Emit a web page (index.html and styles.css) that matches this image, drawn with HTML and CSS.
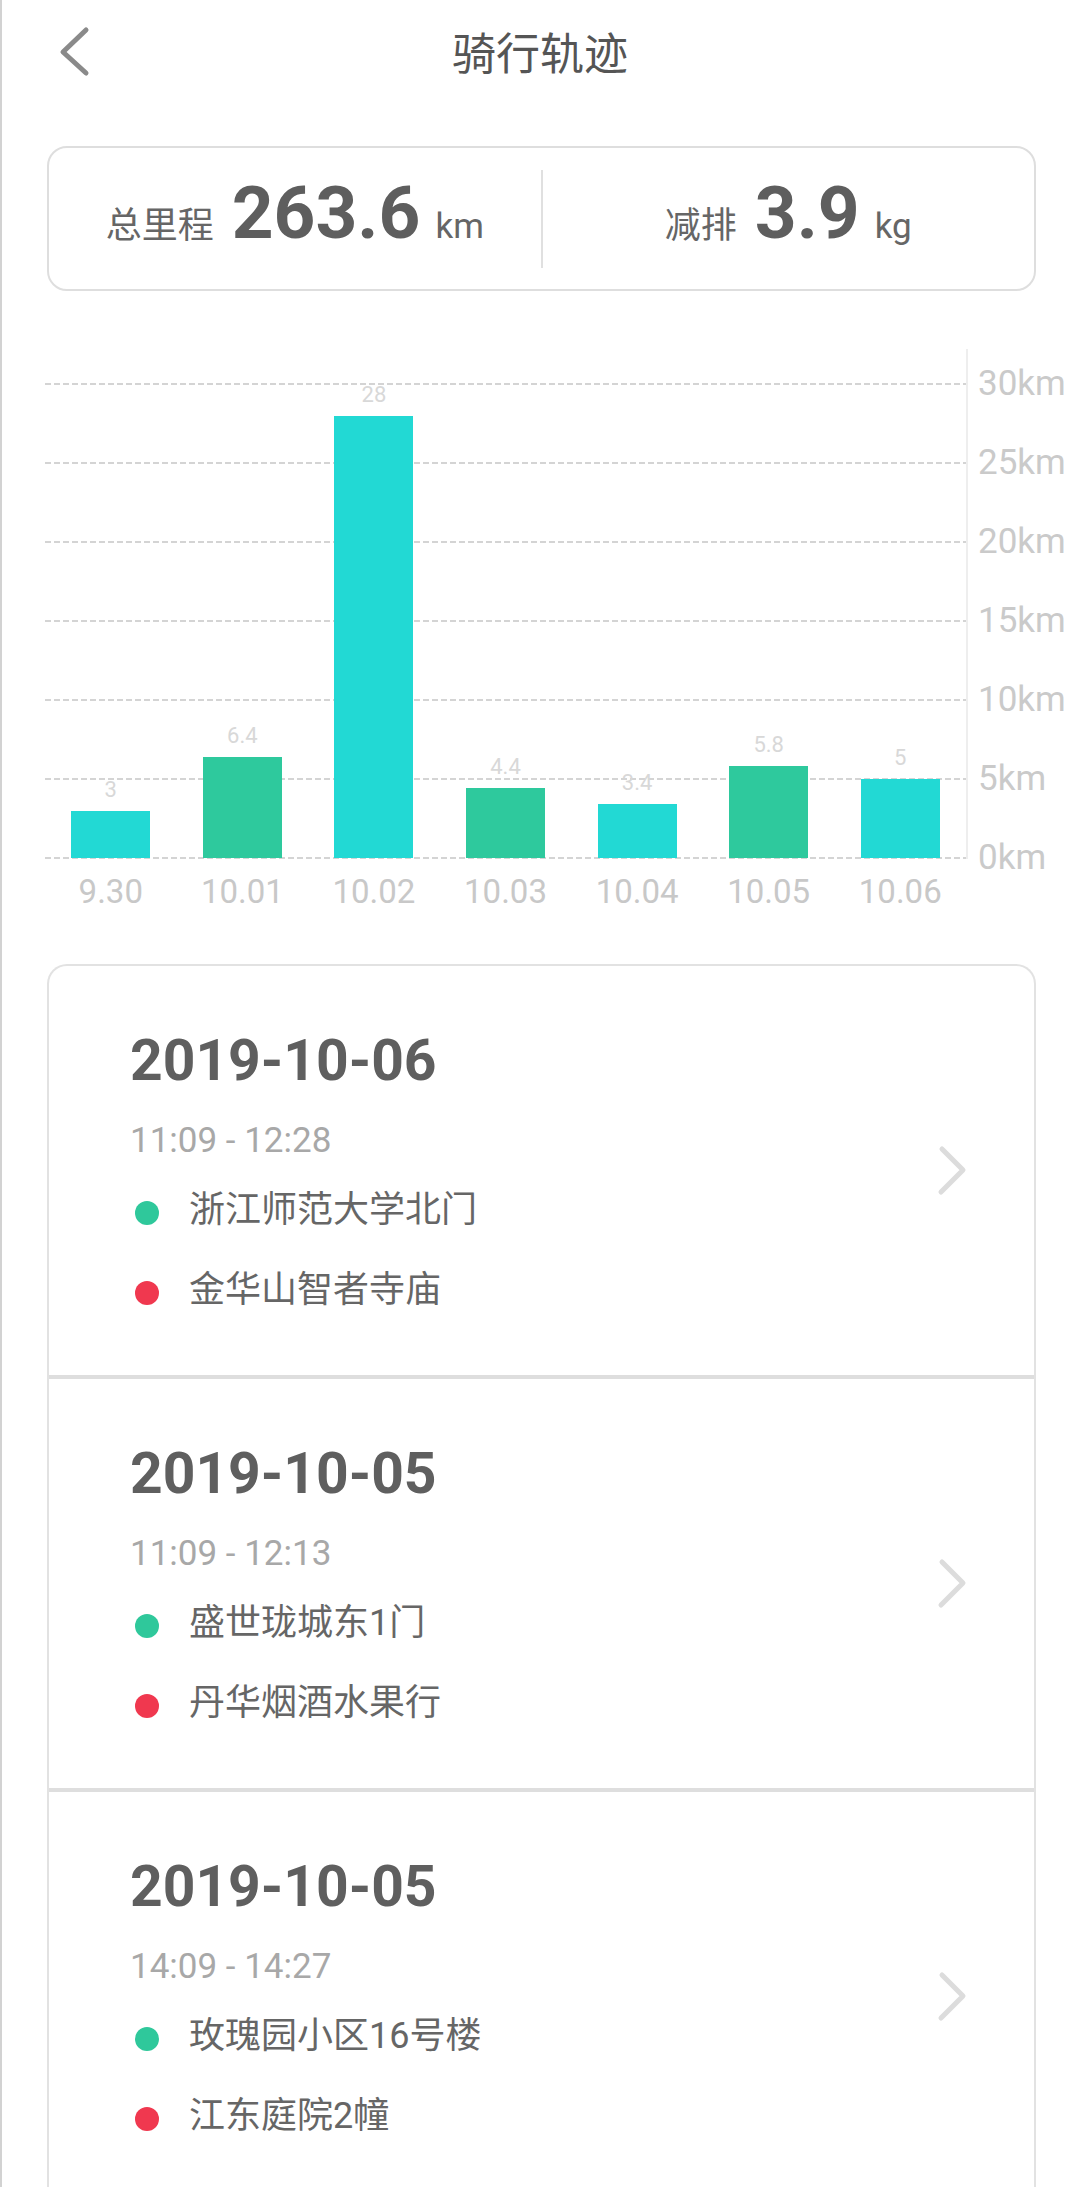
FILE: index.html
```html
<!DOCTYPE html>
<html lang="zh-CN">
<head>
<meta charset="utf-8">
<title>骑行轨迹</title>
<link rel="stylesheet" href="styles.css">
</head>
<body>
<div class="page">
  <header class="header">
    <div class="back">
      <svg width="40" height="60" viewBox="0 0 40 60"><polyline points="31,8 8,30 31,51" fill="none" stroke="#8a8a8a" stroke-width="5" stroke-linecap="round" stroke-linejoin="round"/></svg>
    </div>
    <h1 class="title">骑行轨迹</h1>
    <div></div>
  </header>

  <section class="stats">
    <div class="stat">
      <span class="stat-label">总里程</span>
      <span class="stat-num">263.6</span>
      <span class="stat-unit">km</span>
    </div>
    <div class="stat-divider"></div>
    <div class="stat">
      <span class="stat-label">减排</span>
      <span class="stat-num">3.9</span>
      <span class="stat-unit">kg</span>
    </div>
  </section>

  <section class="chart">
    <div class="plot">
      <div class="gridlines">
        <div class="gl"></div><div class="gl"></div><div class="gl"></div><div class="gl"></div><div class="gl"></div><div class="gl"></div><div class="gl"></div>
      </div>
      <div class="bars">
        <div class="slot"><span class="val">3</span><div class="bar cyan" style="height:47px"></div></div>
        <div class="slot"><span class="val">6.4</span><div class="bar green" style="height:101px"></div></div>
        <div class="slot"><span class="val">28</span><div class="bar cyan" style="height:442px"></div></div>
        <div class="slot"><span class="val">4.4</span><div class="bar green" style="height:70px"></div></div>
        <div class="slot"><span class="val">3.4</span><div class="bar cyan" style="height:54px"></div></div>
        <div class="slot"><span class="val">5.8</span><div class="bar green" style="height:92px"></div></div>
        <div class="slot"><span class="val">5</span><div class="bar cyan" style="height:79px"></div></div>
      </div>
    </div>
    <div class="yaxis">
      <div class="ylabels">
        <span>30km</span><span>25km</span><span>20km</span><span>15km</span><span>10km</span><span>5km</span><span>0km</span>
      </div>
    </div>
    <div class="xlabels">
      <span>9.30</span><span>10.01</span><span>10.02</span><span>10.03</span><span>10.04</span><span>10.05</span><span>10.06</span>
    </div>
  </section>

  <section class="trips">
    <div class="trip">
      <div class="trip-body">
        <div class="trip-date">2019-10-06</div>
        <div class="trip-time">11:09 - 12:28</div>
        <div class="place"><span class="dot start"></span><span class="place-name">浙江师范大学北门</span></div>
        <div class="place second"><span class="dot end"></span><span class="place-name">金华山智者寺庙</span></div>
      </div>
      <svg class="arrow" width="30" height="52" viewBox="0 0 30 52"><polyline points="5,4 26,25 4,47" fill="none" stroke="#dcdcdc" stroke-width="5" stroke-linecap="round" stroke-linejoin="round"/></svg>
    </div>
    <div class="trip">
      <div class="trip-body">
        <div class="trip-date">2019-10-05</div>
        <div class="trip-time">11:09 - 12:13</div>
        <div class="place"><span class="dot start"></span><span class="place-name">盛世珑城东1门</span></div>
        <div class="place second"><span class="dot end"></span><span class="place-name">丹华烟酒水果行</span></div>
      </div>
      <svg class="arrow" width="30" height="52" viewBox="0 0 30 52"><polyline points="5,4 26,25 4,47" fill="none" stroke="#dcdcdc" stroke-width="5" stroke-linecap="round" stroke-linejoin="round"/></svg>
    </div>
    <div class="trip">
      <div class="trip-body">
        <div class="trip-date">2019-10-05</div>
        <div class="trip-time">14:09 - 14:27</div>
        <div class="place"><span class="dot start"></span><span class="place-name">玫瑰园小区16号楼</span></div>
        <div class="place second"><span class="dot end"></span><span class="place-name">江东庭院2幢</span></div>
      </div>
      <svg class="arrow" width="30" height="52" viewBox="0 0 30 52"><polyline points="5,4 26,25 4,47" fill="none" stroke="#dcdcdc" stroke-width="5" stroke-linecap="round" stroke-linejoin="round"/></svg>
    </div>
  </section>
</div>
</body>
</html>
```
FILE: styles.css
```css
* { box-sizing: border-box; }
html, body { margin: 0; padding: 0; background: #ffffff; }
body {
  font-family: Roboto, "Noto Sans CJK SC", "Noto Sans", sans-serif;
  color: #666666;
}
.page {
  width: 1080px;
  min-height: 2187px;
  border-left: 2px solid #d2d2d2;
  overflow: hidden;
}

/* header */
.header {
  display: grid;
  grid-template-columns: 1fr auto 1fr;
  height: 104px;
  padding-top: 6px;
}
.back {
  padding-left: 53px;
  margin-top: 16px;
}
.back svg { display: block; }
.title {
  margin: 0;
  font-size: 44px;
  font-weight: 400;
  line-height: 98px;
  color: #555555;
  transform: translateX(-1px);
}

/* stats card */
.stats {
  display: flex;
  align-items: center;
  height: 145px;
  margin: 42px 44px 0 45px;
  border: 2px solid #dedede;
  border-radius: 20px;
}
.stat {
  flex: 1;
  display: flex;
  align-items: baseline;
  justify-content: center;
  padding-bottom: 12px;
}
.stat-label {
  font-size: 36px;
  line-height: 36px;
  color: #666666;
}
.stat-num {
  font-size: 73px;
  line-height: 74px;
  font-weight: 700;
  color: #5e5e5e;
  margin: 0 15px 0 18px;
}
.stat-unit {
  font-size: 35px;
  line-height: 36px;
  color: #666666;
}
.stat-divider {
  width: 2px;
  height: 98px;
  background: #e0e0e0;
}

/* chart */
.chart {
  display: grid;
  grid-template-columns: 921px auto;
  margin: 58px 0 0 43px;
}
.plot {
  display: grid;
  height: 510px;
}
.gridlines, .bars { grid-area: 1 / 1; }
.gridlines {
  display: flex;
  flex-direction: column;
  gap: 77px;
  padding-top: 34px;
}
.gl {
  height: 2px;
  background: repeating-linear-gradient(90deg, #d4d4d4 0 6px, transparent 6px 9px);
}
.bars {
  display: flex;
  align-items: flex-end;
  padding-bottom: 1px;
}
.slot {
  flex: 1;
  display: flex;
  flex-direction: column;
  align-items: center;
}
.val {
  font-size: 22px;
  line-height: 22px;
  color: #d8d8d8;
  margin-bottom: 10px;
}
.bar { width: 79px; }
.bar.cyan { background: #22d9d4; }
.bar.green { background: #2ec99d; }

.yaxis {
  height: 510px;
  border-left: 2px solid #eeeeee;
  padding-left: 10px;
}
.ylabels {
  display: flex;
  flex-direction: column;
  margin-top: -5px;
}
.ylabels span {
  height: 79px;
  line-height: 79px;
  font-size: 35px;
  color: #cacaca;
  white-space: nowrap;
}
.xlabels {
  grid-column: 1;
  display: flex;
  margin-top: 13px;
}
.xlabels span {
  flex: 1;
  text-align: center;
  font-size: 33px;
  line-height: 40px;
  color: #c8c8c8;
}

/* trips */
.trips {
  margin: 52px 44px 0 45px;
  border: 2px solid #e2e2e2;
  border-bottom: none;
  border-radius: 20px 20px 0 0;
}
.trip {
  display: flex;
  align-items: center;
  border-bottom: 4px solid #dedede;
}
.trip-body {
  flex: 1;
  padding: 60px 0 60px 81px;
}
.trip-date {
  font-size: 57px;
  line-height: 70px;
  font-weight: 700;
  color: #5f5f5f;
}
.trip-time {
  margin-top: 23px;
  font-size: 35px;
  line-height: 44px;
  color: #a8a8a8;
}
.place {
  display: flex;
  align-items: flex-start;
  margin-top: 22px;
  height: 50px;
}
.place.second { margin-top: 30px; }
.dot {
  width: 24px;
  height: 24px;
  border-radius: 50%;
  margin: 16px 30px 0 5px;
  flex: none;
}
.dot.start { background: #2fc89b; }
.dot.end { background: #f0384f; }
.place-name {
  font-size: 36px;
  line-height: 50px;
  color: #666666;
}
.arrow {
  display: block;
  margin-right: 67px;
  flex: none;
}
```
